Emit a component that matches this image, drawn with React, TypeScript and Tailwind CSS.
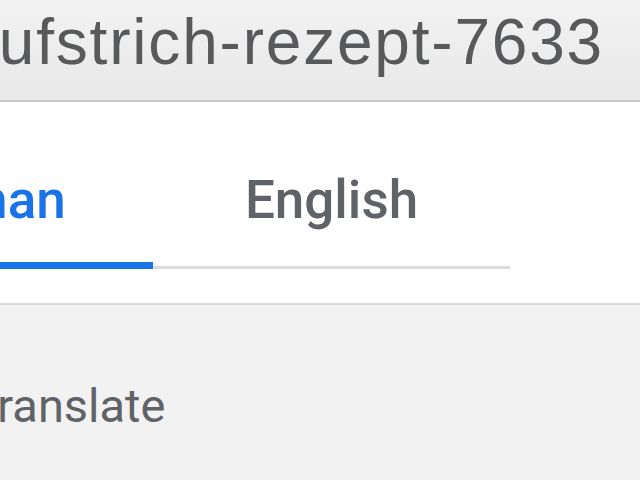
export default function App() {
    return (
        <div className="flex h-[480px] w-[640px] flex-col overflow-hidden bg-[#f2f2f2]">
            {/* Address bar */}
            <div className="flex h-[102px] shrink-0 justify-end overflow-hidden border-b-2 border-[#c9c9c9] bg-gradient-to-b from-[#f2f2f2] to-[#e8e8e8] pr-[36px] pt-[10px]">
                <span className="whitespace-nowrap font-['Liberation_Sans',sans-serif] text-[64px] leading-none tracking-[1.8px] text-[#58595b]">
                    brotaufstrich-rezept-7633
                </span>
            </div>

            {/* Language tabs */}
            <div className="h-[203px] shrink-0 overflow-hidden border-b-2 border-[#d9d9d9] bg-white pt-[72px]">
                <div className="ml-[-209px] flex font-['Roboto',sans-serif] text-[53px] font-medium leading-none">
                    <div className="flex w-[362px] flex-col items-center">
                        <span className="h-[53px] text-[#1a73e8]">German</span>
                        <div className="mt-[35px] flex h-[7px] w-full items-end">
                            <div className="h-[7px] w-full bg-[#1a73e8]" />
                        </div>
                    </div>
                    <div className="flex w-[357px] flex-col items-center">
                        <span className="h-[53px] text-[#5f6368]">English</span>
                        <div className="mt-[35px] flex h-[7px] w-full items-end">
                            <div className="h-[3px] w-full bg-[#dadce0]" />
                        </div>
                    </div>
                </div>
            </div>

            {/* Footer action */}
            <div className="pt-[77px]">
                <span className="ml-[-29px] whitespace-nowrap font-['Roboto',sans-serif] text-[47px] leading-none text-[#5f6368]">
                    Translate
                </span>
            </div>
        </div>
    );
}
